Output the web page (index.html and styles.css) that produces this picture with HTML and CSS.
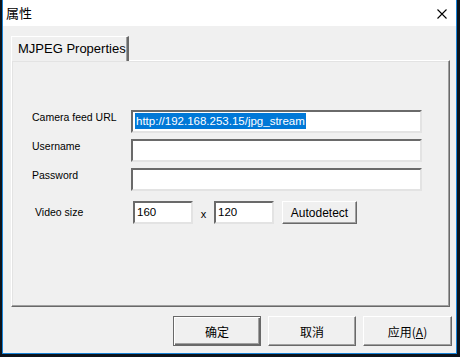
FILE: index.html
```html
<!DOCTYPE html>
<html lang="zh">
<head>
    <meta charset="UTF-8">
    <title>属性</title>
    <link rel="stylesheet" href="styles.css">
</head>
<body>
    <div class="window">
        <div class="titlebar">
            <span class="title">属性</span>
            <span class="close">
                <svg width="10" height="10" viewBox="0 0 10 10">
                    <path d="M0.5 0.5 L9.5 9.5 M9.5 0.5 L0.5 9.5" stroke="#000" stroke-width="1.1" fill="none"/>
                </svg>
            </span>
        </div>
        <div class="content">
            <div class="tabs">
                <div class="tab">MJPEG Properties</div>
            </div>
            <div class="panel">
                <div class="row">
                    <span class="label">Camera feed URL</span>
                    <div class="field wide"><span class="selected">http://192.168.253.15/jpg_stream</span></div>
                </div>
                <div class="row">
                    <span class="label">Username</span>
                    <div class="field wide"></div>
                </div>
                <div class="row">
                    <span class="label">Password</span>
                    <div class="field wide"></div>
                </div>
                <div class="row size-row">
                    <span class="label">Video size</span>
                    <div class="field small">160</div>
                    <span class="times">x</span>
                    <div class="field small">120</div>
                    <button class="btn autodetect">Autodetect</button>
                </div>
            </div>
            <div class="footer">
                <button class="btn dialog default">确定</button>
                <button class="btn dialog">取消</button>
                <button class="btn dialog">应用(<u>A</u>)</button>
            </div>
        </div>
    </div>
</body>
</html>
```

FILE: styles.css
```css
html, body {
    margin: 0;
    height: 100%;
}
body {
    background: #0c131b;
    font-family: "Liberation Sans", Arial, sans-serif;
    font-size: 11px;
    color: #000;
    display: flex;
    align-items: flex-start;
    overflow: hidden;
}
.window {
    margin-left: 2px;
    width: 455px;
    height: 354px;
    box-sizing: border-box;
    border: 1px solid #1883d7;
    border-top: none;
    background: #f0f0f0;
    display: flex;
    flex-direction: column;
}
.titlebar {
    height: 26px;
    background: #fff;
    display: flex;
    align-items: center;
    justify-content: space-between;
    padding: 0 9px 0 3px;
}
.title {
    font-family: "Noto Sans CJK SC", sans-serif;
    font-size: 13px;
    margin-top: -1px;
}
.close {
    display: flex;
    margin-top: 1px;
}
.content {
    padding: 10px 4px 0 8px;
    display: flex;
    flex-direction: column;
}
.tabs {
    display: flex;
    margin-bottom: -1px;
}
.tab {
    width: 118px;
    height: 25px;
    box-sizing: border-box;
    background: #f0f0f0;
    border-top: 1px solid #fff;
    border-left: 1px solid #fff;
    border-right: 2px solid #696969;
    box-shadow: inset -1px 0 #a0a0a0;
    font-family: "Liberation Sans", Arial, sans-serif;
    font-size: 13px;
    padding: 4px 0 0 6px;
    position: relative;
    z-index: 1;
}
.panel {
    width: 439px;
    height: 247px;
    box-sizing: border-box;
    border-top: 1px solid #fff;
    border-left: 1px solid #fff;
    border-right: 1px solid #696969;
    border-bottom: 1px solid #696969;
    box-shadow: inset -1px -1px #a0a0a0, inset 1px 1px #e3e3e3;
    padding: 49px 0 0 20px;
    display: flex;
    flex-direction: column;
    gap: 6px;
}
.row {
    display: flex;
    align-items: flex-start;
}
.label {
    width: 99px;
    line-height: 13px;
    font-size: 10.5px;
    padding-top: 1px;
}
.field {
    height: 23px;
    box-sizing: border-box;
    background: #fff;
    border-top: 2px solid #6a6a6a;
    border-left: 2px solid #6a6a6a;
    border-right: 2px solid #e3e3e3;
    border-bottom: 2px solid #e3e3e3;
    padding: 1px 0 0 2px;
    line-height: 16px;
    font-size: 11.5px;
    white-space: nowrap;
}
.wide {
    width: 291px;
}
.selected {
    background: #0078d7;
    color: #fff;
    display: inline-block;
    padding: 0 1px;
}
.size-row {
    margin-top: 4px;
    padding-left: 3px;
}
.size-row .label {
    width: 98px;
    padding-top: 5px;
}
.small {
    width: 60px;
}
.times {
    width: 21px;
    text-align: center;
    padding-top: 7px;
    font-size: 11px;
}
.btn {
    box-sizing: border-box;
    background: #e1e1e1;
    border: none;
    border-top: 1px solid #fff;
    border-left: 1px solid #fff;
    border-right: 1px solid #696969;
    border-bottom: 1px solid #696969;
    box-shadow: inset -1px -1px #a0a0a0;
    padding: 0;
    color: #000;
    cursor: pointer;
}
.autodetect {
    margin-left: 8px;
    width: 75px;
    height: 23px;
    font-family: "Liberation Sans", Arial, sans-serif;
    font-size: 12px;
    background: #f0f0f0;
}
.footer {
    display: flex;
    justify-content: flex-end;
    gap: 7px;
    margin-top: 9px;
}
.dialog {
    width: 88px;
    height: 30px;
    font-family: "Noto Sans CJK SC", sans-serif;
    font-size: 12px;
    background: #f0f0f0;
}
.dialog:last-child {
    width: 89px;
}
.default {
    border: 1px solid #696969;
    box-shadow: inset 1px 1px #fff, inset -1px -1px #696969, inset -2px -2px #a0a0a0;
}
```
